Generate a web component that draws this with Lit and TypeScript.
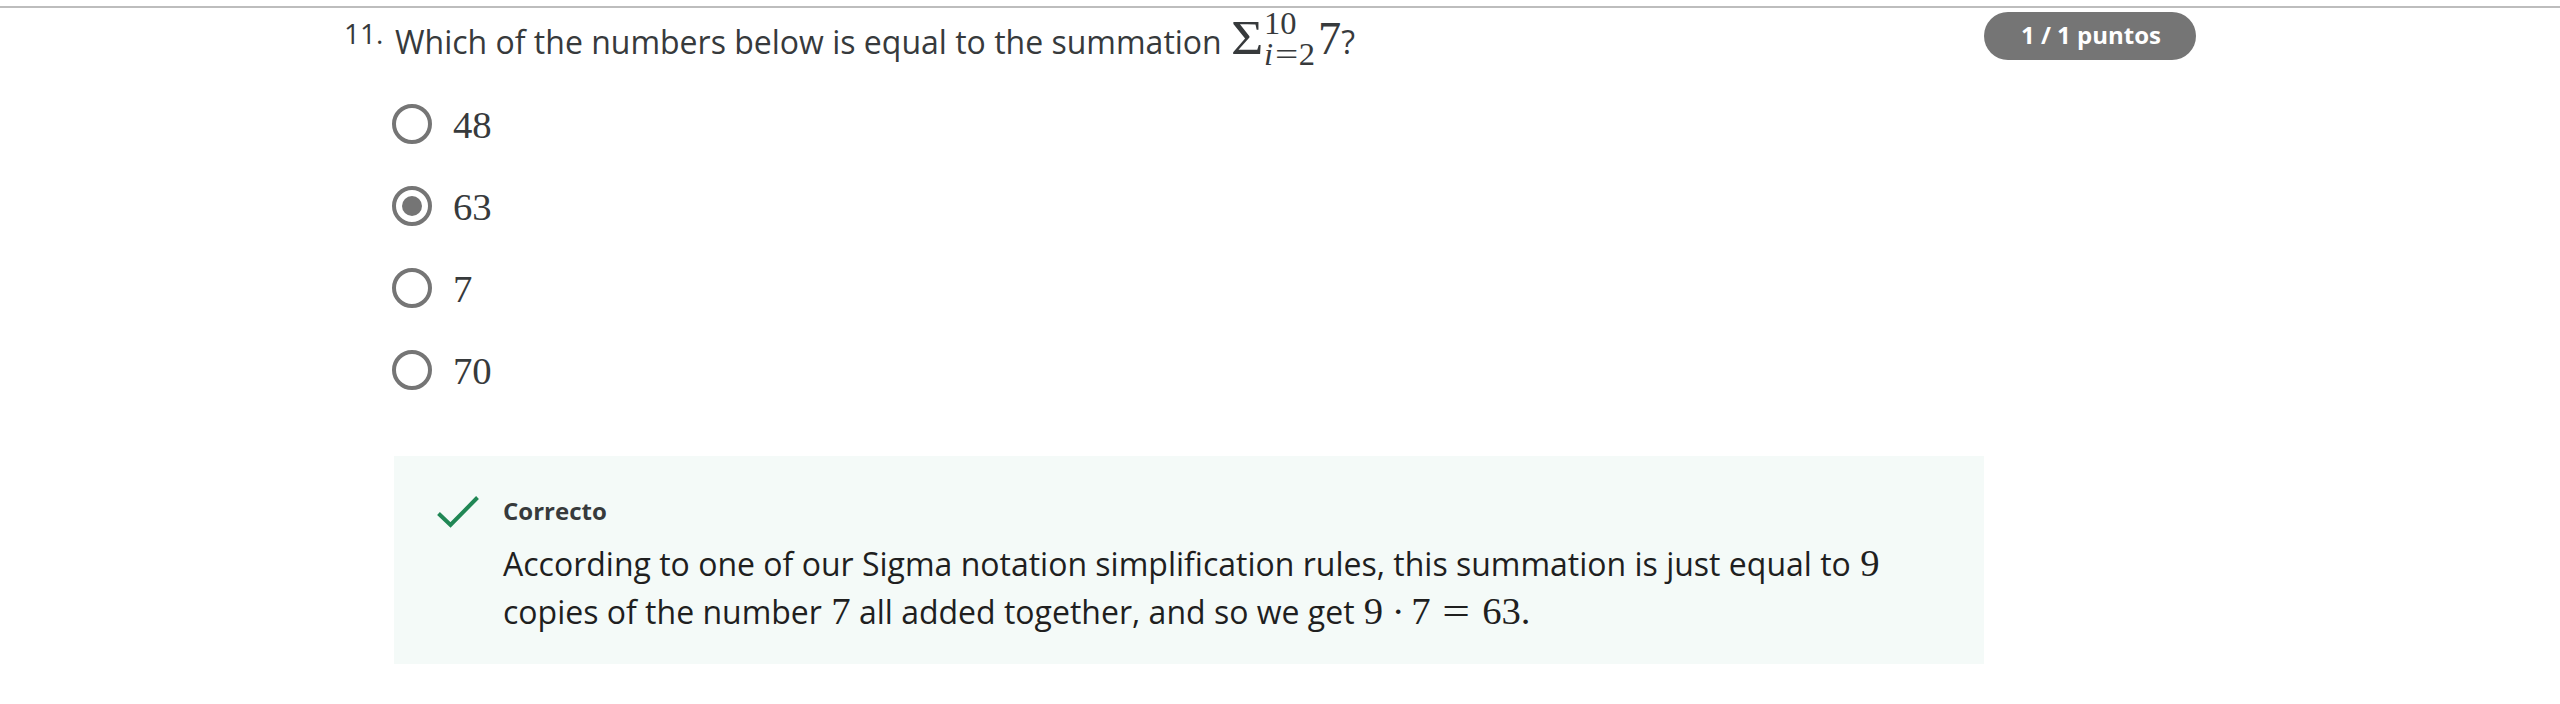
import { LitElement, html, css } from "lit";
import { customElement, property } from "lit/decorators.js";
import { classMap } from "lit/directives/class-map.js";

@customElement("quiz-option")
class QuizOption extends LitElement {
  @property() label = "";
  @property({ type: Boolean }) checked = false;

  static styles = css`
    :host {
      display: flex;
      align-items: center;
      gap: 21px;
      height: 40px;
    }
    .ring {
      box-sizing: border-box;
      display: flex;
      align-items: center;
      justify-content: center;
      width: 40px;
      height: 40px;
      border: 4px solid #757575;
      border-radius: 50%;
    }
    .ring.on::after {
      content: "";
      width: 20px;
      height: 20px;
      border-radius: 50%;
      background: #757575;
    }
    .value {
      font: 38.72px/44px "Liberation Serif", serif;
      padding-top: 2px;
      color: #373a3c;
    }
  `;

  render() {
    return html`
      <span class=${classMap({ ring: true, on: this.checked })}></span>
      <span class="value">${this.label}</span>
    `;
  }
}

@customElement("app-root")
class AppRoot extends LitElement {
  static styles = css`
    :host {
      display: block;
      box-sizing: border-box;
      height: 704px;
      padding-top: 6px;
      overflow: hidden;
      background: #fff;
      color: #373a3c;
      font-family: "Open Sans", sans-serif;
    }
    .question {
      display: grid;
      grid-template-columns: 50px 1590px 212px;
      align-items: start;
      padding: 4px 0 0 344px;
      border-top: 2px solid #bdbdbd;
    }
    .number {
      font-size: 28px;
      line-height: 42px;
      white-space: nowrap;
    }
    .prompt {
      display: flex;
      align-items: baseline;
      height: 64px;
      padding: 2px 0 0 1px;
      font-size: 32px;
      line-height: 48px;
      white-space: pre;
    }
    .math {
      margin-left: 1px;
      font-family: "Liberation Serif", serif;
      font-size: 38.72px;
      line-height: 0;
      white-space: nowrap;
    }
    .math.large {
      display: flex;
      align-items: baseline;
      font-size: 46.46px;
      line-height: 48px;
    }
    .sigma {
      width: 33px;
      font-size: 48px;
      transform: scaleX(1.16);
      transform-origin: left;
    }
    .limits {
      display: flex;
      flex-direction: column;
      align-self: flex-start;
      width: 54px;
      margin-top: -6px;
      font-size: 32.5px;
      line-height: 31.4px;
    }
    .lower {
      display: flex;
    }
    .lower i {
      width: 9.5px;
    }
    .op {
      display: inline-block;
      text-align: center;
    }
    .eq {
      width: 0.778em;
      transform: scaleX(1.27);
    }
    .rel {
      margin: 0 0.278em;
    }
    .dot {
      width: 0.278em;
      margin: 0 0.222em;
    }
    .options {
      display: flex;
      flex-direction: column;
      gap: 42px;
      margin: 26px 0 0 -2px;
    }
    .badge {
      box-sizing: border-box;
      height: 48px;
      padding-left: 37px;
      border-radius: 24px;
      background: #757575;
      color: #fff;
      font-size: 24px;
      font-weight: 700;
      line-height: 45px;
      white-space: nowrap;
    }
    .feedback {
      box-sizing: border-box;
      display: grid;
      grid-template-columns: 66px 1fr;
      height: 208px;
      margin-top: 66px;
      padding: 37px 43px 0;
      background: #f4faf8;
    }
    .check {
      width: 42px;
      height: 32px;
      margin-top: 3px;
    }
    .title {
      font-size: 24px;
      font-weight: 700;
      line-height: 36px;
    }
    .explanation {
      margin-top: 11px;
      color: #1f1f1f;
      font-size: 32px;
      line-height: 48px;
      white-space: nowrap;
    }
  `;

  private answers = [
    { label: "48", checked: false },
    { label: "63", checked: true },
    { label: "7", checked: false },
    { label: "70", checked: false },
  ];

  render() {
    return html`
      <section class="question">
        <div class="number">11.</div>
        <div>
          <div class="prompt"><span>Which of the numbers below is equal to the summation </span><span class="math large"><span class="sigma">Σ</span><span class="limits"><span>10</span><span class="lower"><i>i</i><span class="op eq">=</span><span>2</span></span></span><span>7</span></span><span>?</span></div>
          <div class="options">
            ${this.answers.map(
              (a) => html`<quiz-option .label=${a.label} .checked=${a.checked}></quiz-option>`
            )}
          </div>
          <div class="feedback">
            <svg class="check" viewBox="0 0 42 32">
              <path d="M1.5 17.5 13.5 29 40.5 1.5" fill="none" stroke="#208755" stroke-width="4"/>
            </svg>
            <div>
              <div class="title">Correcto</div>
              <div class="explanation">
                <div>According to one of our Sigma notation simplification rules, this summation is just equal to <span class="math">9</span></div>
                <div>copies of the number <span class="math">7</span> all added together, and so we get <span class="math">9<span class="op dot">·</span>7<span class="op eq rel">=</span>63.</span></div>
              </div>
            </div>
          </div>
        </div>
        <div class="badge">1 / 1 puntos</div>
      </section>
    `;
  }
}
